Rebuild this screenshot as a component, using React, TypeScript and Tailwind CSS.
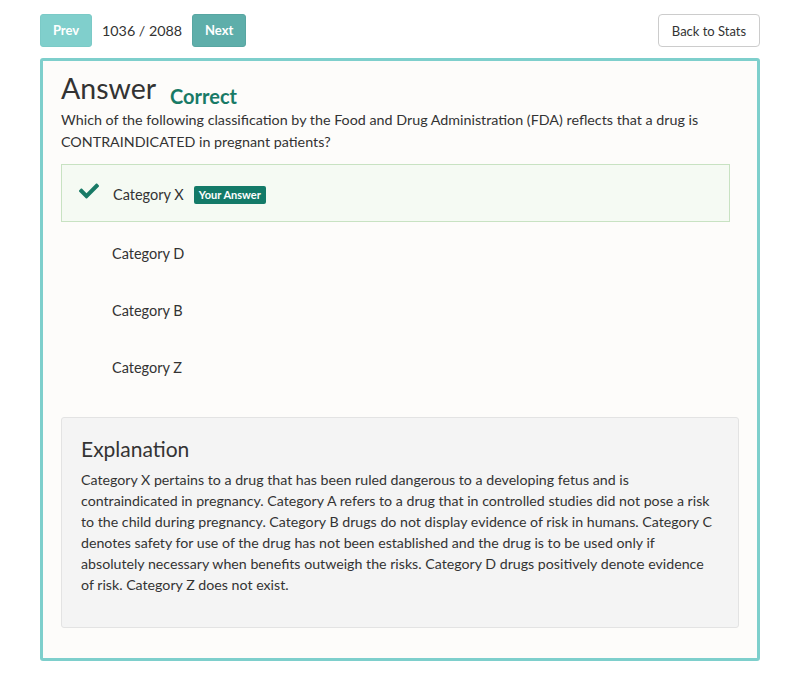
import { FaCheck } from 'react-icons/fa'

const options = ['Category D', 'Category B', 'Category Z']

const App = () => {
  return (
    <div className="min-h-screen bg-white px-10 pt-[14px] text-[#333] font-['Lato','Open_Sans',sans-serif]">
      <div className="flex items-center justify-between">
        <div className="flex items-center gap-[10px]">
          <button className="h-[33px] w-[52px] rounded-[3px] border border-[#7bcac7] bg-[#80cfcc] text-[13px] font-bold text-white">
            Prev
          </button>
          <span className="text-[14.3px] text-[#333]">1036 / 2088</span>
          <button className="h-[33px] w-[54px] rounded-[3px] border border-[#58a6a2] bg-[#5eaeaa] text-[13px] font-bold text-white">
            Next
          </button>
        </div>
        <button className="h-[33px] w-[102px] rounded-[4px] border border-[#cccccc] bg-white pt-[2px] text-[13px] text-[#333]">
          Back to Stats
        </button>
      </div>

      <div className="mt-[11px] rounded-[3px] border-[3px] border-[#7ecfcc] bg-[#fdfcfa] px-[18px] pt-[9px] pb-[30px]">
        <div className="flex items-end gap-[14px]">
          <h1 className="text-[28.5px] leading-[36px] text-[#333]">Answer</h1>
          <span className="mb-[-5px] text-[20px] font-bold leading-[30px] text-[#187a66]">Correct</span>
        </div>
        <p className="mt-[3px] text-[14.3px] leading-[22px] text-[#333]">
          Which of the following classification by the Food and Drug Administration (FDA) reflects that a drug is
          CONTRAINDICATED in pregnant patients?
        </p>

        <div className="mt-[11px] mr-[9px]">
          <div className="flex h-[58px] items-center border border-[#c8e2c2] bg-[#f5faf3] pt-[4px]">
            <FaCheck className="ml-[17px] mt-[-8px] h-[20px] w-[20px] text-[#187a66]" />
            <span className="ml-[14px] text-[14.5px]">Category X</span>
            <span className="ml-[10px] rounded-[2px] bg-[#137a68] px-[5px] py-[2px] text-[11px] font-bold leading-[14px] text-white">
              Your Answer
            </span>
          </div>
          {options.map((o) => (
            <div key={o} className="flex h-[57px] items-center pl-[51px] pt-[6px] text-[14.5px]">
              {o}
            </div>
          ))}
        </div>

        <div className="mt-[24px] rounded-[3px] border border-[#e3e3e3] bg-[#f4f4f4] px-[19px] pt-[17px] pb-[32px]">
          <h2 className="text-[21px] leading-[28px] text-[#333]">Explanation</h2>
          <p className="mt-[6px] text-[14.2px] leading-[21px] text-[#333]">
            Category X pertains to a drug that has been ruled dangerous to a developing fetus and is
            contraindicated in pregnancy. Category A refers to a drug that in controlled studies did not pose a risk
            to the child during pregnancy. Category B drugs do not display evidence of risk in humans. Category C
            denotes safety for use of the drug has not been established and the drug is to be used only if
            absolutely necessary when benefits outweigh the risks. Category D drugs positively denote evidence
            of risk. Category Z does not exist.
          </p>
        </div>
      </div>
    </div>
  )
}

export default App
